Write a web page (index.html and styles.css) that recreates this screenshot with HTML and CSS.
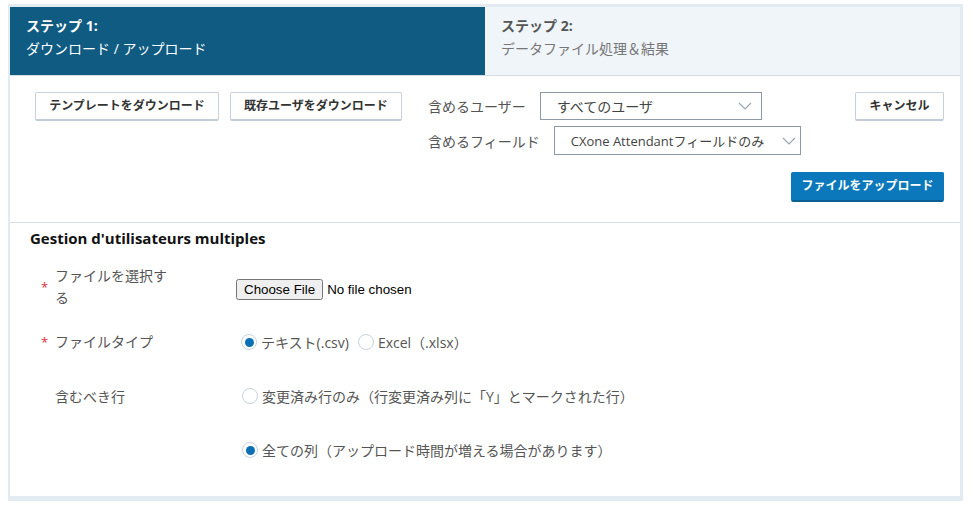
FILE: index.html
```html
<!DOCTYPE html>
<html lang="ja">
<head>
    <meta charset="UTF-8">
    <meta name="viewport" content="width=device-width, initial-scale=1.0">
    <title>一括ユーザ管理</title>

    <link rel="stylesheet" href="styles.css">
</head>
<body>

    <div class="wizard">
        <div class="steps">
            <div class="step active">
                <div class="step-num">ステップ 1:</div>
                <div class="step-name">ダウンロード / アップロード</div>
            </div>
            <div class="step">
                <div class="step-num">ステップ 2:</div>
                <div class="step-name">データファイル処理＆結果</div>
            </div>
        </div>

        <div class="toolbar">
            <div class="toolbar-top">
                <div class="dl-btns">
                    <button class="btn btn-tpl">テンプレートをダウンロード</button>
                    <button class="btn btn-users">既存ユーザをダウンロード</button>
                </div>

                <div class="filters">
                    <div class="filter">
                        <span class="filter-label">含めるユーザー</span>
                        <div class="select sel-users">
                            <span class="select-text">すべてのユーザ</span>
                            <svg class="chevron" width="14" height="8" viewBox="0 0 14 8"><path d="M1 1 L7 7 L13 1" fill="none" stroke="#9aa6b2" stroke-width="1.2"/></svg>
                        </div>
                    </div>
                    <div class="filter">
                        <span class="filter-label">含めるフィールド</span>
                        <div class="select sel-fields">
                            <span class="select-text">CXone Attendantフィールドのみ</span>
                            <svg class="chevron" width="14" height="8" viewBox="0 0 14 8"><path d="M1 1 L7 7 L13 1" fill="none" stroke="#9aa6b2" stroke-width="1.2"/></svg>
                        </div>
                    </div>
                </div>

                <button class="btn btn-cancel">キャンセル</button>
            </div>

            <div class="toolbar-bottom">
                <button class="btn primary">ファイルをアップロード</button>
            </div>
        </div>

        <div class="form">
            <h2>Gestion d'utilisateurs multiples</h2>

            <div class="row">
                <span class="req">*</span>
                <label class="row-label">ファイルを選択する</label>
                <div class="row-ctrl file-ctrl">
                    <input type="file" class="file">
                </div>
            </div>

            <div class="row">
                <span class="req">*</span>
                <label class="row-label">ファイルタイプ</label>
                <div class="row-ctrl">
                    <label class="opt"><input type="radio" name="ftype" checked><span>テキスト(.csv)</span></label>
                    <label class="opt"><input type="radio" name="ftype"><span>Excel（.xlsx）</span></label>
                </div>
            </div>

            <div class="row tall">
                <span class="req"></span>
                <label class="row-label">含むべき行</label>
                <div class="row-ctrl stack">
                    <label class="opt"><input type="radio" name="rows"><span>変更済み行のみ（行変更済み列に「Y」とマークされた行）</span></label>
                    <label class="opt"><input type="radio" name="rows" checked><span>全ての列（アップロード時間が増える場合があります）</span></label>
                </div>
            </div>
        </div>
    </div>

</body>
</html>
```

FILE: styles.css
```css
body {
    margin: 0;
    padding: 4px 12px 13px 8px;
    background: #fff;
    font-family: "Open Sans", "Noto Sans CJK JP", sans-serif;
    font-size: 14px;
    color: #555;
}

.wizard {
    border: solid #e2eaf2;
    border-width: 3px 3px 5px 2px;
}

/* step header */
.steps {
    display: flex;
    height: 68px;
    border-bottom: 1px solid #d5dde5;
}
.step {
    flex: 1;
    padding: 9px 16px 0;
    background: #f0f5f9;
    color: #777;
}
.step.active {
    background: #0f5b82;
    color: #fff;
}
.step-num {
    font-weight: bold;
    line-height: 20px;
    color: #555;
}
.step.active .step-num {
    color: #fff;
}
.step-name {
    margin-top: 3px;
    line-height: 20px;
}

/* toolbar */
.toolbar {
    padding: 16px 16px 20px 25px;
    border-bottom: 1px solid #d5dde5;
}
.toolbar-top {
    display: flex;
    align-items: flex-start;
}
.toolbar-bottom {
    display: flex;
    justify-content: flex-end;
    margin-top: 17px;
}
.dl-btns {
    flex: none;
    display: flex;
    gap: 11px;
}
.btn {
    flex: none;
    height: 29px;
    padding: 0 11px 3px;
    border: 1px solid #c8d0da;
    border-bottom: 2px solid #c3ccd6;
    border-radius: 2px;
    background: #fff;
    font-family: "Open Sans", "Noto Sans CJK JP", sans-serif;
    font-size: 12px;
    font-weight: bold;
    color: #333;
    white-space: nowrap;
    cursor: pointer;
}
.btn-tpl {
    width: 184px;
}
.btn-users {
    width: 172px;
}
.btn-cancel {
    width: 89px;
    margin-left: auto;
}
.btn.primary {
    height: 30px;
    width: 153px;
    padding: 0 0 3px;
    background: #0a78bb;
    border-color: #0a78bb;
    border-bottom-color: #0b5f93;
    color: #fff;
}

.filters {
    flex: none;
    margin-left: 26px;
    display: flex;
    flex-direction: column;
    gap: 6px;
}
.filter {
    display: flex;
    align-items: center;
}
.filter-label {
    margin-right: 14px;
    white-space: nowrap;
}
.select {
    display: flex;
    align-items: center;
    height: 28px;
    padding: 0 9px 0 16px;
    border: 1px solid #8c9aa8;
    color: #444;
    box-sizing: border-box;
    overflow: hidden;
}
.sel-users {
    width: 222px;
}
.sel-fields {
    width: 247px;
    height: 29px;
    padding-right: 4px;
}
.sel-fields .select-text {
    font-size: 13px;
}
.select-text {
    flex: 1;
    white-space: nowrap;
    overflow: hidden;
}
.chevron {
    flex: none;
    margin-left: 4px;
}

/* form */
.form {
    padding: 5px 20px 19px;
}
.form h2 {
    margin: 0 0 11px;
    font-size: 15px;
    line-height: 20px;
    font-weight: bold;
    color: #111;
}
.row {
    display: flex;
    align-items: center;
    min-height: 55px;
}
.req {
    width: 25px;
    padding-left: 11px;
    box-sizing: border-box;
    color: #e0303a;
    font-size: 13px;
}
.row-label {
    width: 118px;
    margin-right: 63px;
    line-height: 22px;
    color: #555;
}
.row.tall {
    align-items: flex-start;
}
.row.tall .row-label {
    line-height: 55px;
}
.row-ctrl {
    display: flex;
    align-items: center;
}
.file-ctrl {
    padding-top: 6px;
}
.row-ctrl.stack {
    flex-direction: column;
    align-items: flex-start;
}
.row-ctrl.stack .opt {
    height: 54px;
    margin-left: 1px;
}

.file {
    font-family: "Liberation Sans", Arial, sans-serif;
    font-size: 13.33px;
    color: #000;
}

.opt {
    display: flex;
    align-items: center;
    margin-right: 4px;
    color: #555;
}
.opt input {
    appearance: none;
    width: 16px;
    height: 16px;
    margin: 0 4px 0 5px;
    border: 1px solid #c8d2dc;
    border-radius: 50%;
    background: #fff;
    position: relative;
}
.opt input:checked::after {
    content: "";
    position: absolute;
    left: 2.5px;
    top: 3px;
    width: 9px;
    height: 9px;
    border-radius: 50%;
    background: #0a6fb4;
}
```
